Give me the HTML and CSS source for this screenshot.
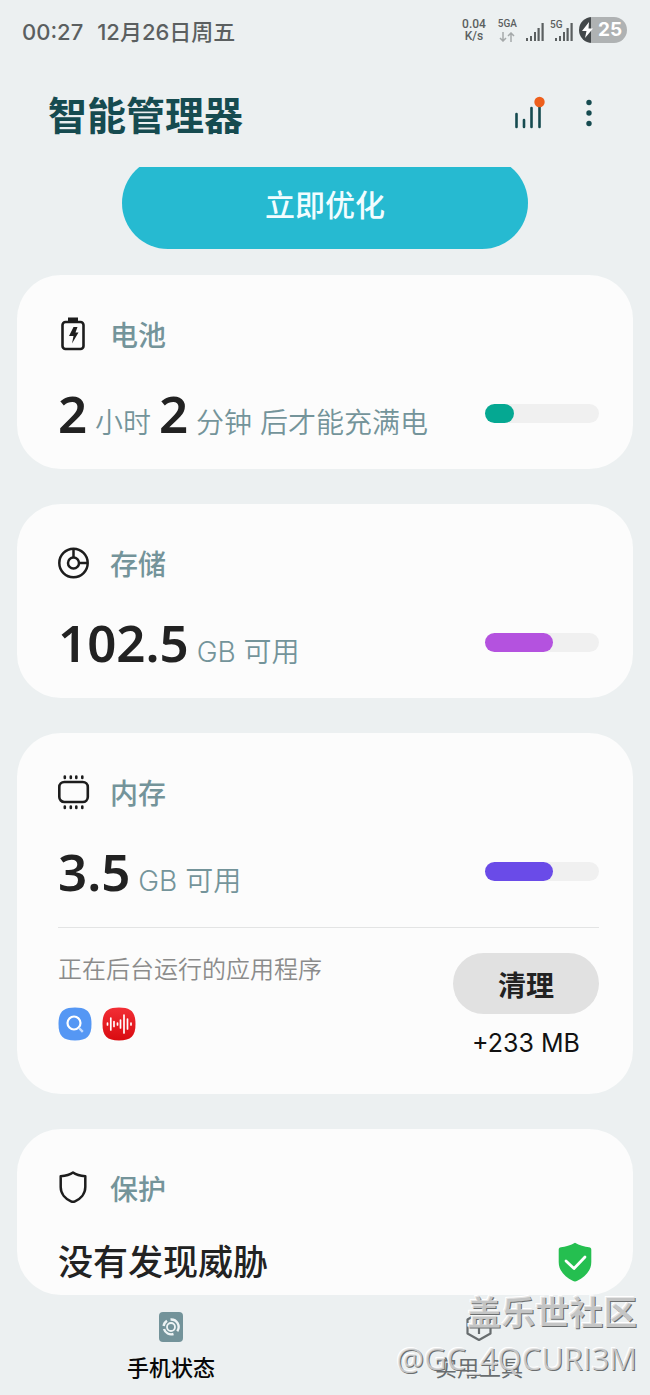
FILE: index.html
```html
<!DOCTYPE html>
<html lang="zh-CN">
<head>
<meta charset="utf-8">
<meta name="viewport" content="width=device-width, initial-scale=1">
<title>智能管理器</title>
<link rel="stylesheet" href="styles.css">
</head>
<body>
<div class="statusbar">
  <span class="clock">00:27</span>
  <span class="date">12月26日周五</span>
  <div class="indicators">
    <span class="speed"><span>0.04</span><span>K/s</span></span>
    <span class="network">5GA
      <svg width="16" height="10" viewBox="0 0 16 10" fill="none" stroke="#a5a9aa" stroke-width="1.500"><path d="M4 0v9M1 6l3 3 3-3M12 10V1M9 4l3-3 3 3"/></svg>
    </span>
    <svg class="signal" width="18" height="18" viewBox="0 0 18 18" fill="#5b5f60"><path d="M0 15h2v3H0zM4 13h2v5H4zM8 9h2v9H8zM11.500 5h2.200v13h-2.200zM15.500 0h2.200v18h-2.200z"/></svg>
    <span class="sim2">
      <span class="sim2-label">5G</span>
      <svg width="18" height="18" viewBox="0 0 18 18" fill="#5b5f60"><path d="M0 15h2v3H0zM4 13h2v5H4zM8 9h2v9H8zM11.500 5h2.200v13h-2.200zM15.500 0h2.200v18h-2.200z"/></svg>
    </span>
    <span class="charge">
      <svg width="12" height="16" viewBox="0 0 12 16" fill="#fff"><path d="M7 0L0 9h4.500L3 16l8-9.500H6.500z"/></svg>25
    </span>
  </div>
</div>

<header class="appbar">
  <h1>智能管理器</h1>
  <button class="icon-button" type="button" aria-label="使用统计">
    <svg width="32" height="34" viewBox="0 0 32 34"><path d="M3.500 18v13M11 24v7M18.500 12v19M26.500 10v21" stroke="#164b50" stroke-width="2.600" stroke-linecap="round"/><circle cx="26.500" cy="6" r="5.200" fill="#ee5f1c"/></svg>
  </button>
  <button class="icon-button" type="button" aria-label="更多选项">
    <svg width="8" height="28" viewBox="0 0 8 28" fill="#164b50"><circle cx="4" cy="3.500" r="2.700"/><circle cx="4" cy="14" r="2.700"/><circle cx="4" cy="24.500" r="2.700"/></svg>
  </button>
</header>

<main class="content">
  <button class="optimize" type="button">立即优化</button>

  <section class="card">
    <div class="card-head">
      <svg width="32" height="36" viewBox="0 0 32 36"><rect x="4.500" y="5" width="21" height="27" rx="3" fill="none" stroke="#1d1d1d" stroke-width="2.600"/><path d="M10 .500h10V5H10zM15.500 10h4l-2 5.500h3L14 26.500l1.500-7.500H11z" fill="#1d1d1d"/></svg>
      <h2>电池</h2>
    </div>
    <div class="card-row">
      <p class="value"><b>2</b> 小时 <b>2</b> 分钟 后才能充满电</p>
      <div class="meter"><span class="fill green" style="width:25%"></span></div>
    </div>
  </section>

  <section class="card">
    <div class="card-head">
      <svg width="32" height="36" viewBox="0 0 32 36" fill="none" stroke="#1d1d1d" stroke-width="2.500"><circle cx="15.500" cy="17" r="14.200"/><circle cx="15.500" cy="17" r="5.500"/><path d="M15.500 3v8.500M21 17h8.500"/></svg>
      <h2>存储</h2>
    </div>
    <div class="card-row">
      <p class="value"><b>102.5</b> GB 可用</p>
      <div class="meter"><span class="fill purple" style="width:60%"></span></div>
    </div>
  </section>

  <section class="card">
    <div class="card-head">
      <svg width="32" height="36" viewBox="0 0 32 36" fill="none" stroke="#1d1d1d" stroke-width="2.600"><rect x="1.300" y="7" width="28.500" height="20" rx="5"/><path d="M6.800 1.500v1.500M12.800 1.500v1.500M18.300 1.500v1.500M24.300 1.500v1.500M6.800 31.500V33M12.800 31.500V33M18.300 31.500V33M24.300 31.500V33" stroke-linecap="round"/></svg>
      <h2>内存</h2>
    </div>
    <div class="card-row">
      <p class="value"><b>3.5</b> GB 可用</p>
      <div class="meter"><span class="fill violet" style="width:60%"></span></div>
    </div>
    <div class="background-apps">
      <div class="apps">
        <p>正在后台运行的应用程序</p>
        <div class="app-icons">
          <svg width="34" height="34" viewBox="0 0 34 34"><path d="M17 .500C29 .500 33.500 5 33.500 17S29 33.500 17 33.500.500 29 .500 17 5 .500 17 .500z" fill="#5597f4"/><circle cx="16" cy="16" r="6.500" fill="none" stroke="#fff" stroke-width="2.200"/><path d="M21 21l3.800 3.800" stroke="#c4dcff" stroke-width="2.400"/></svg>
          <svg width="34" height="34" viewBox="0 0 34 34"><defs><linearGradient id="recorder" x2="0" y2="1"><stop stop-color="#f22e35"/><stop offset="1" stop-color="#d90b10"/></linearGradient></defs><path d="M17 .500C29 .500 33.500 5 33.500 17S29 33.500 17 33.500.500 29 .500 17 5 .500 17 .500z" fill="url(#recorder)"/><path d="M5.500 16v2M8.800 11v12M12 14.500v5M15.500 16v2M18.500 13v8M22 8v18M25.500 12v10M29 16v2" stroke="#fff" stroke-width="1.700" stroke-linecap="round"/></svg>
        </div>
      </div>
      <div class="clean">
        <button class="clean-button" type="button">清理</button>
        <span>+233 MB</span>
      </div>
    </div>
  </section>

  <section class="card card-last">
    <div class="card-head">
      <svg width="32" height="36" viewBox="0 0 32 36" fill="none" stroke="#1d1d1d" stroke-width="2.500" stroke-linejoin="round"><path d="M15 1.500c3.500 2.500 8 3.400 12.300 3.800V16c0 7-5 12-10.300 14.300q-2 .900-4 0C7.700 28 2.700 23 2.700 16V5.300C7 4.900 11.500 4 15 1.500z"/></svg>
      <h2>保护</h2>
    </div>
    <div class="card-row">
      <p class="verdict">没有发现威胁</p>
      <svg class="safe" width="34" height="40" viewBox="0 0 34 40"><path d="M17 .800c4 2.800 10 4 14 4.500 1.500.200 2.300 1 2.300 2.500V20c0 9-6.500 15-14 18.800-1.500.800-3.100.800-4.600 0C7.200 35 .700 29 .700 20V7.800c0-1.500.800-2.300 2.300-2.500C7 4.800 13 3.600 17 .800z" fill="#25bf50"/><path d="M8 19l8 7.500L27 15" fill="none" stroke="#fff" stroke-width="2.800" stroke-linecap="round" stroke-linejoin="round"/></svg>
    </div>
  </section>
</main>

<nav class="tabs">
  <a class="tab active" href="#status">
    <svg width="26" height="32" viewBox="0 0 26 32"><rect x="1" y="1" width="24" height="30" rx="4" fill="#73939a"/><g fill="none" stroke="#eef4f5"><circle cx="13" cy="16" r="4" stroke-width="1.800"/><path d="M12.500 8.500a7.500 7.500 0 0 1 6.800 11.700M15.500 23a7.500 7.500 0 0 1-9.500-5M5.600 15A7.500 7.500 0 0 1 9 9.700" stroke-width="2.400"/></g></svg>
    手机状态
  </a>
  <a class="tab" href="#tools">
    <svg width="26" height="32" viewBox="0 0 26 32" fill="none" stroke="#686d6f" stroke-width="2.200" stroke-linejoin="round"><path d="M13 2l11.500 6.500v14L13 29 1.500 22.500v-14zM7 13h12M13 13v10"/></svg>
    实用工具
  </a>
</nav>

<div class="watermark"><strong>盖乐世社区</strong><span>@GC_4QCURI3M</span></div>
</body>
</html>
```
FILE: styles.css
```css
* {
  box-sizing: border-box;
}

body {
  position: relative;
  display: flex;
  flex-direction: column;
  min-height: 100vh;
  margin: 0;
  overflow-x: hidden;
  background: #ecf0f1;
  color: #222;
  font-family: Inter, "Noto Sans CJK SC", sans-serif;
}

h1, h2, p {
  margin: 0;
}

button {
  padding: 0;
  border: 0;
  font-family: inherit;
  cursor: pointer;
}

svg {
  display: block;
  flex: none;
}

.statusbar {
  display: flex;
  align-items: center;
  gap: 14px;
  height: 64px;
  padding: 0 23px 0 22px;
  color: #5b5f60;
  font-size: 22px;
  line-height: 32px;
  font-weight: 500;
  white-space: nowrap;
}

.indicators {
  display: flex;
  align-items: center;
  height: 32px;
  margin-left: auto;
  font-family: Roboto, sans-serif;
}

.speed {
  display: flex;
  flex-direction: column;
  align-items: center;
  margin: 0 12px 4px 0;
  font-size: 12px;
  line-height: 12px;
}

.network {
  display: flex;
  flex-direction: column;
  align-items: center;
  gap: 3px;
  margin: 0 9px 3px 0;
  font-size: 10px;
  line-height: 10px;
}

.signal {
  margin-right: 6px;
}

.sim2 {
  position: relative;
  padding-left: 5px;
  margin-right: 6px;
}

.sim2-label {
  position: absolute;
  top: -4px;
  left: 0;
  font-size: 10px;
  line-height: 12px;
}

.charge {
  display: flex;
  align-items: center;
  gap: 4px;
  width: 48px;
  height: 26px;
  margin-bottom: 5px;
  padding-left: 3px;
  border-radius: 13px;
  background: linear-gradient(90deg, #43484a 25%, #afb2b3 25%);
  color: #fff;
  font-family: Inter, sans-serif;
  font-size: 19px;
  font-weight: 700;
}

.appbar {
  display: flex;
  align-items: center;
  height: 103px;
  padding: 0 45px 0 48px;
}

.appbar h1 {
  flex: 1;
  color: #164b50;
  font-size: 39px;
  line-height: 56px;
  font-weight: 700;
}

.icon-button {
  display: grid;
  place-items: center;
  width: 32px;
  height: 48px;
  margin: 0 0 6px 28px;
  background: none;
}

.content {
  display: flex;
  flex-direction: column;
  gap: 35px;
  padding: 0 17px;
  overflow: hidden;
}

.optimize {
  align-self: center;
  width: 66%;
  height: 92px;
  margin: -10px 0 -9px;
  border-radius: 46px;
  background: #26bad1;
  color: #f2fdff;
  font-size: 30px;
  font-weight: 500;
}

.card {
  padding: 36px 34px 18px 41px;
  border-radius: 44px;
  background: #fcfcfc;
}

.card-last {
  padding-bottom: 0;
}

.card-head {
  display: flex;
  align-items: center;
  gap: 20px;
  height: 48px;
}

.card-head h2 {
  padding-top: 2px;
  color: #74949a;
  font-size: 28px;
  line-height: 40px;
  font-weight: 500;
}

.card-row {
  display: flex;
  align-items: center;
  justify-content: space-between;
  height: 76px;
  margin-top: 16px;
}

.card-last .card-row {
  height: 66px;
}

.value {
  padding-top: 10px;
  color: #74949a;
  font-size: 28px;
  line-height: 64px;
  font-weight: 350;
  white-space: nowrap;
}

.value b {
  color: #222;
  font-family: "Noto Sans", sans-serif;
  font-size: 51px;
  font-weight: 600;
}

.meter {
  width: 114px;
  height: 19px;
  border-radius: 10px;
  background: #f0f0f0;
}

.fill {
  display: block;
  height: 100%;
  border-radius: 10px;
}

.green {
  background: #05a892;
}

.purple {
  background: #b452df;
}

.violet {
  background: #6a4be8;
}

.background-apps {
  display: flex;
  justify-content: space-between;
  margin-top: 18px;
  padding: 25px 0 16px;
  border-top: 1px solid #e3e4e4;
}

.apps p {
  color: #8b8b8b;
  font-size: 24px;
  line-height: 34px;
  font-weight: 350;
}

.app-icons {
  display: flex;
  gap: 10px;
  margin-top: 20px;
}

.clean {
  display: flex;
  flex-direction: column;
  align-items: center;
  gap: 12px;
  color: #111;
  font-size: 25px;
  line-height: 34px;
}

.clean-button {
  width: 146px;
  height: 61px;
  border-radius: 31px;
  background: #e1e1e1;
  color: #222;
  font-size: 28px;
  font-weight: 700;
}

.verdict {
  font-size: 35px;
  line-height: 52px;
  font-weight: 500;
}

.safe {
  margin-right: 7px;
}

.tabs {
  display: flex;
  padding: 16px 17px 12px;
}

.tab {
  display: flex;
  flex: 1;
  flex-direction: column;
  align-items: center;
  gap: 9px;
  color: #686d6f;
  font-size: 22px;
  line-height: 32px;
  text-decoration: none;
}

.active {
  color: #080808;
  font-weight: 500;
}

.watermark {
  position: absolute;
  right: 13px;
  bottom: 15px;
  display: flex;
  flex-direction: column;
  align-items: flex-end;
  color: rgba(222, 222, 222, 0.8);
  font-family: "Open Sans", "Noto Sans CJK SC", sans-serif;
  font-size: 31px;
  line-height: 46px;
  text-shadow: 1px 1px 0 #6b6e6f, -1px -1px 0 #fff;
  pointer-events: none;
}

.watermark strong {
  font-size: 34px;
  font-weight: 700;
}
```
